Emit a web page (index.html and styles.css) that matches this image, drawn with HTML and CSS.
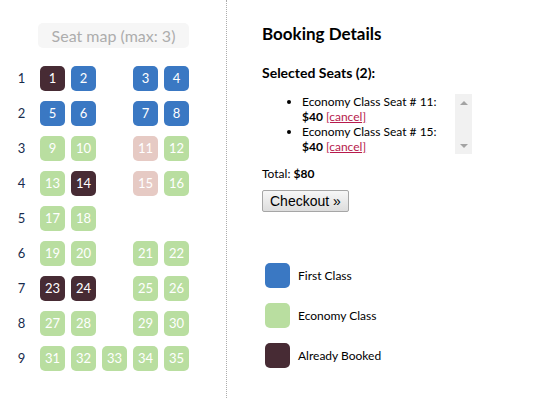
FILE: index.html
```html
<!DOCTYPE html>
<html lang="en">
<head>
<meta charset="utf-8">
<title>Seat map</title>
<link rel="stylesheet" href="styles.css">
</head>
<body>
<div class="page">
  <div class="map">
    <div class="front-indicator">Seat map (max: 3)</div>
    <div class="row"><div class="cell label">1</div><div class="cell seat booked">1</div><div class="cell seat first">2</div><div class="cell space"></div><div class="cell seat first">3</div><div class="cell seat first">4</div></div>
    <div class="row"><div class="cell label">2</div><div class="cell seat first">5</div><div class="cell seat first">6</div><div class="cell space"></div><div class="cell seat first">7</div><div class="cell seat first">8</div></div>
    <div class="row"><div class="cell label">3</div><div class="cell seat eco">9</div><div class="cell seat eco">10</div><div class="cell space"></div><div class="cell seat selected">11</div><div class="cell seat eco">12</div></div>
    <div class="row"><div class="cell label">4</div><div class="cell seat eco">13</div><div class="cell seat booked">14</div><div class="cell space"></div><div class="cell seat selected">15</div><div class="cell seat eco">16</div></div>
    <div class="row"><div class="cell label">5</div><div class="cell seat eco">17</div><div class="cell seat eco">18</div></div>
    <div class="row"><div class="cell label">6</div><div class="cell seat eco">19</div><div class="cell seat eco">20</div><div class="cell space"></div><div class="cell seat eco">21</div><div class="cell seat eco">22</div></div>
    <div class="row"><div class="cell label">7</div><div class="cell seat booked">23</div><div class="cell seat booked">24</div><div class="cell space"></div><div class="cell seat eco">25</div><div class="cell seat eco">26</div></div>
    <div class="row"><div class="cell label">8</div><div class="cell seat eco">27</div><div class="cell seat eco">28</div><div class="cell space"></div><div class="cell seat eco">29</div><div class="cell seat eco">30</div></div>
    <div class="row"><div class="cell label">9</div><div class="cell seat eco">31</div><div class="cell seat eco">32</div><div class="cell seat eco">33</div><div class="cell seat eco">34</div><div class="cell seat eco">35</div></div>
  </div>
  <div class="details">
    <h2 class="title">Booking Details</h2>
    <h3 class="subtitle">Selected Seats (2):</h3>
    <div class="seat-box">
      <ul class="selected-seats">
        <li>Economy Class Seat # 11: <b>$40</b> <a href="#" class="cancel">[cancel]</a></li>
        <li>Economy Class Seat # 15: <b>$40</b> <a href="#" class="cancel">[cancel]</a></li>
      </ul>
      <div class="scrollbar"><span class="arrow-up"></span><span class="arrow-down"></span></div>
    </div>
    <div class="total">Total: <b>$80</b></div>
    <button class="checkout-button" type="button">Checkout &raquo;</button>
    <ul class="legend">
      <li class="legend-item"><div class="cell seat first"></div><span class="legend-desc">First Class</span></li>
      <li class="legend-item"><div class="cell seat eco"></div><span class="legend-desc">Economy Class</span></li>
      <li class="legend-item"><div class="cell seat booked"></div><span class="legend-desc">Already Booked</span></li>
    </ul>
  </div>
</div>
</body>
</html>
```

FILE: styles.css
```css
html, body {
  margin: 0;
  padding: 0;
  background: #ffffff;
}

body {
  font-family: Lato, "Open Sans", sans-serif;
  color: #000000;
}

.page {
  display: flex;
  align-items: flex-start;
}

.map {
  width: 226px;
  height: 375px;
  border-right: 1px dotted #adadad;
  padding-top: 23px;
  flex: none;
}

.front-indicator {
  width: 145px;
  margin: 0 0 15px 38px;
  padding: 3px;
  line-height: 19px;
  font-size: 16px;
  background-color: #f6f6f6;
  color: #adadad;
  text-align: center;
  border-radius: 5px;
}

.row {
  display: flex;
  height: 35px;
  padding-left: 6px;
}

.cell {
  width: 25px;
  height: 25px;
  margin: 3px;
  line-height: 25px;
  font-size: 13px;
  text-align: center;
  color: #182C4E;
  flex: none;
}

.seat {
  color: #ffffff;
  border-radius: 5px;
}

.first { background-color: #3a78c3; }
.eco { background-color: #B9DEA0; }
.selected { background-color: #E6CAC4; }
.booked { background-color: #472B34; }

.details {
  margin-left: 35px;
  font-size: 12px;
  flex: 1;
}

.title {
  margin: 23px 0 20px 0;
  font-size: 17px;
  font-weight: bold;
}

.subtitle {
  margin: 0;
  font-size: 14px;
  font-weight: bold;
}

.seat-box {
  display: flex;
  width: 210px;
  margin: 13px 0 12px 0;
}

.selected-seats {
  margin: 0;
  padding-left: 40px;
  width: 153px;
  flex: none;
  line-height: 15px;
}

.scrollbar {
  width: 17px;
  flex: none;
  background: #f1f1f1;
  display: flex;
  flex-direction: column;
  justify-content: space-between;
  align-items: center;
  padding: 7px 0 6px 0;
}

.arrow-up {
  width: 0;
  height: 0;
  border-left: 4px solid transparent;
  border-right: 4px solid transparent;
  border-bottom: 4px solid #a3a3a3;
}

.arrow-down {
  width: 0;
  height: 0;
  border-left: 4px solid transparent;
  border-right: 4px solid transparent;
  border-top: 4px solid #a3a3a3;
}

.cancel {
  color: #b71a4c;
}

.total {
  line-height: 15px;
}

.checkout-button {
  display: block;
  margin: 9px 0 10px 0;
  padding: 2px 7px;
  font-family: "Liberation Sans", Arial, sans-serif;
  font-size: 14px;
  line-height: 16px;
  color: #000000;
  background: linear-gradient(#f7f7f7, #dddddd);
  border: 1px solid #a6a6a6;
  border-radius: 2px;
}

.legend {
  list-style: none;
  margin: 48px 0 0 0;
  padding: 0;
  display: flex;
  flex-direction: column;
  gap: 9px;
}

.legend-item {
  display: flex;
  align-items: center;
  height: 31px;
}

.legend-desc {
  margin-left: 5px;
  color: #000000;
}
```
